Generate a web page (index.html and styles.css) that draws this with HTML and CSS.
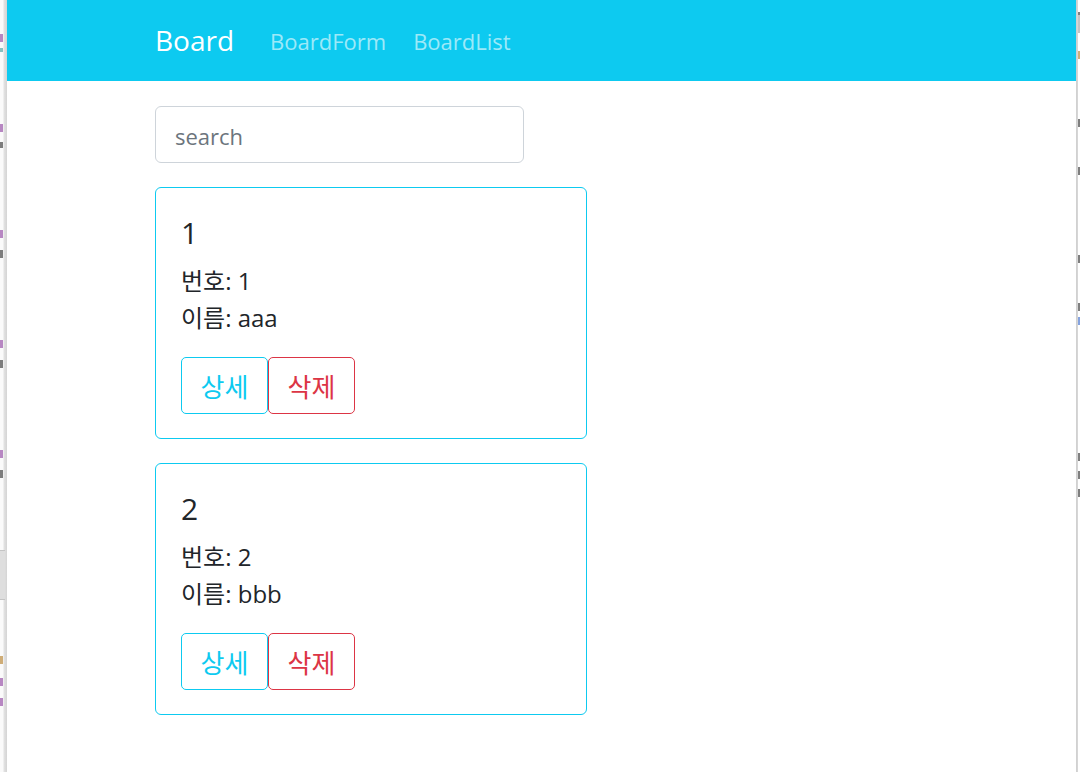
FILE: index.html
```html
<!DOCTYPE html>
<html lang="ko">
<head>
<meta charset="utf-8">
<title>Board</title>
<link rel="stylesheet" href="styles.css">
</head>
<body>
<div class="desk">
  <div class="edge edge-left">
    <i class="mark purple f1"></i>
    <i class="mark teal f2"></i>
    <i class="mark purple f3"></i>
    <i class="mark dark f4"></i>
    <i class="mark purple f5"></i>
    <i class="mark dark f6"></i>
    <i class="mark purple f5"></i>
    <i class="mark dark f6"></i>
    <i class="mark purple f5"></i>
    <i class="mark dark f6"></i>
    <i class="band"></i>
    <i class="mark orange f7"></i>
    <i class="mark purple f8"></i>
    <i class="mark purple f6"></i>
  </div>
  <div class="viewport">
    <nav class="navbar">
      <div class="container nav-inner">
        <a class="brand" href="#">Board</a>
        <a class="nav-link" href="#">BoardForm</a>
        <a class="nav-link" href="#">BoardList</a>
      </div>
    </nav>
    <main class="container content">
      <input class="search" type="text" placeholder="search">
      <div class="card">
        <h4 class="card-title">1</h4>
        <p class="card-text">번호: 1</p>
        <p class="card-text">이름: aaa</p>
        <div class="actions">
          <button class="btn btn-info">상세</button>
          <button class="btn btn-danger">삭제</button>
        </div>
      </div>
      <div class="card">
        <h4 class="card-title">2</h4>
        <p class="card-text">번호: 2</p>
        <p class="card-text">이름: bbb</p>
        <div class="actions">
          <button class="btn btn-info">상세</button>
          <button class="btn btn-danger">삭제</button>
        </div>
      </div>
    </main>
  </div>
  <div class="edge edge-right">
    <i class="mark dark r1"></i>
    <i class="rband"></i>
    <i class="mark orange r2"></i>
    <i class="mark dark r3"></i>
    <i class="mark dark r4"></i>
    <i class="mark dark r5"></i>
    <i class="mark dark r6"></i>
    <i class="mark blue r7"></i>
    <i class="mark dark r8"></i>
    <i class="mark dark r9"></i>
    <i class="mark dark r9"></i>
  </div>
</div>
</body>
</html>
```
FILE: styles.css
```css
* { box-sizing: border-box; }
html, body { margin: 0; padding: 0; }
body {
  width: 1080px;
  height: 772px;
  overflow: hidden;
  background: #fff;
  font-family: "Open Sans", "Noto Sans CJK KR", sans-serif;
  color: #212529;
}
.desk {
  display: flex;
  height: 772px;
}
.edge {
  flex: none;
  overflow: hidden;
  display: flex;
  flex-direction: column;
}
.edge-left {
  width: 7px;
  background: linear-gradient(to right, #fafafa 0, #fafafa 3px, #e2e2e2 4px, #d4d4d4 7px);
  align-items: flex-start;
}
.edge-right {
  width: 5px;
  background: linear-gradient(to right, #cfcfcf 0, #d8d8d8 2px, #ffffff 2px);
  align-items: flex-start;
  padding-left: 2px;
}
.mark {
  display: block;
  width: 3px;
  height: 8px;
  opacity: 0.6;
}
.band {
  display: block;
  width: 5px;
  height: 50px;
  margin-top: 72px;
  background: #dedede;
  border-top: 1px solid #c4c4c4;
  border-bottom: 1px solid #c4c4c4;
}
.rband {
  display: block;
  width: 3px;
  height: 18px;
  background: #c4c4c4;
}
.purple { background: #8a3a9c; }
.teal { background: #3a9a9a; }
.dark { background: #2a2a2a; }
.orange { background: #b37a20; }
.blue { background: #3366cc; }
.f1 { margin-top: 34px; }
.f2 { margin-top: 6px; height: 4px; }
.f3 { margin-top: 72px; }
.f4 { margin-top: 10px; height: 6px; }
.f5 { margin-top: 82px; }
.f6 { margin-top: 12px; }
.f7 { margin-top: 56px; }
.f8 { margin-top: 14px; }
.r1 { margin-top: 12px; height: 3px; }
.r2 { margin-top: 18px; }
.r3 { margin-top: 60px; }
.r4 { margin-top: 40px; }
.r5 { margin-top: 80px; }
.r6 { margin-top: 40px; }
.r7 { margin-top: 6px; }
.r8 { margin-top: 128px; }
.r9 { margin-top: 10px; }

.viewport {
  flex: none;
  width: 1069px;
  height: 772px;
  background: #fff;
  overflow: hidden;
}
.container {
  padding-left: 148px;
  padding-right: 24px;
}
.navbar {
  background: #0dcaf0;
  height: 81px;
}
.nav-inner {
  display: flex;
  align-items: center;
  height: 81px;
  padding-top: 2px;
}
.brand {
  color: #fff;
  text-decoration: none;
  font-size: 28px;
  margin-right: 36px;
  padding-bottom: 4px;
}
.nav-link {
  color: rgba(255, 255, 255, 0.6);
  text-decoration: none;
  font-size: 22px;
  margin-right: 27px;
  padding-bottom: 1px;
}
.content {
  padding-top: 25px;
  display: flex;
  flex-direction: column;
  align-items: flex-start;
}
.search {
  width: 369px;
  height: 57px;
  border: 1px solid #ced4da;
  border-radius: 6px;
  padding: 3px 19px 0;
  font-family: "Open Sans", "Noto Sans CJK KR", sans-serif;
  font-size: 22px;
  color: #212529;
  outline: none;
  margin-bottom: 24px;
}
.search::placeholder { color: #6c757d; }
.card {
  width: 432px;
  height: 252px;
  border: 1px solid #0dcaf0;
  border-radius: 6px;
  padding: 23px 25px;
  margin-bottom: 24px;
}
.card-title {
  margin: 0 0 7px;
  font-weight: 400;
  font-size: 30px;
  line-height: 44px;
}
.card-text {
  margin: 0;
  font-size: 24px;
  line-height: 37px;
}
.actions {
  display: flex;
  margin-top: 21px;
}
.btn {
  width: 87px;
  height: 57px;
  background: #fff;
  border: 1px solid;
  border-radius: 5px;
  font-family: "Open Sans", "Noto Sans CJK KR", sans-serif;
  font-size: 26px;
  padding: 0;
}
.btn-info { color: #0dcaf0; border-color: #0dcaf0; }
.btn-danger { color: #dc3545; border-color: #dc3545; }
```
